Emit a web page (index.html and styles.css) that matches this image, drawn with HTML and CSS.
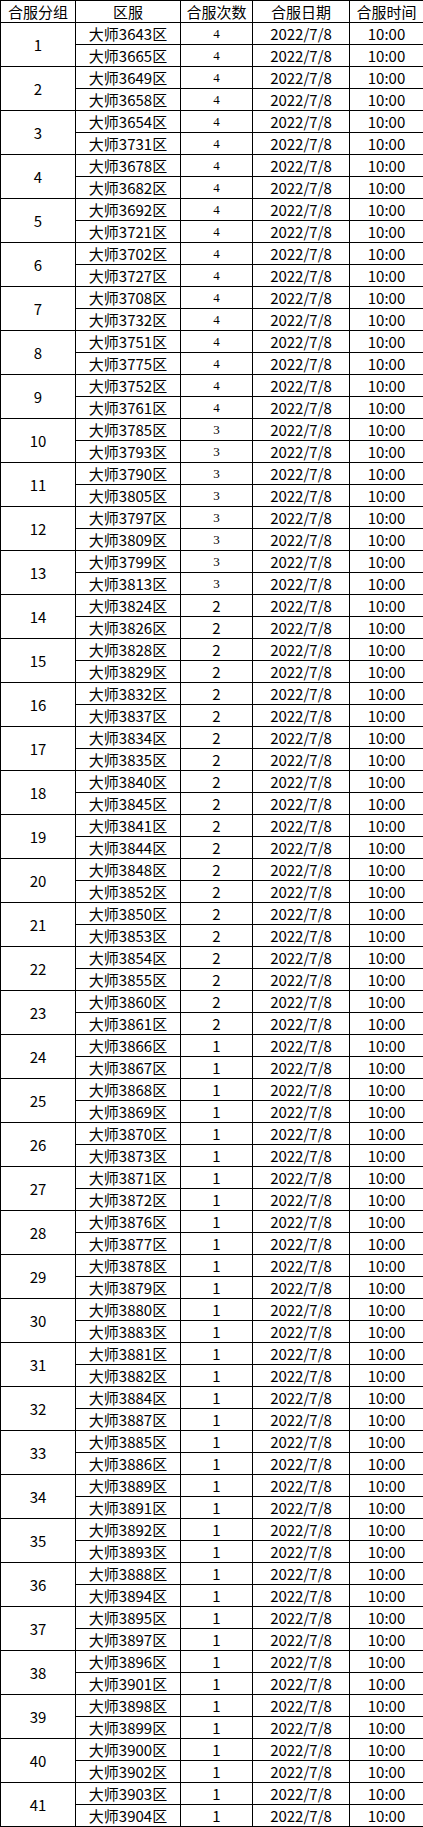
FILE: index.html
```html
<!DOCTYPE html>
<html lang="zh-CN">
<head>
<meta charset="utf-8">
<title>合服安排</title>
<link rel="stylesheet" href="styles.css">
</head>
<body>
<table class="merge">
<colgroup><col class="c1"><col class="c2"><col class="c3"><col class="c4"><col class="c5"></colgroup>
<thead>
<tr><th>合服分组</th><th>区服</th><th>合服次数</th><th>合服日期</th><th>合服时间</th></tr>
</thead>
<tbody>
<tr><td rowspan="2">1</td><td>大师3643区</td><td class="s">4</td><td>2022/7/8</td><td>10:00</td></tr>
<tr><td>大师3665区</td><td class="s">4</td><td>2022/7/8</td><td>10:00</td></tr>
<tr><td rowspan="2">2</td><td>大师3649区</td><td class="s">4</td><td>2022/7/8</td><td>10:00</td></tr>
<tr><td>大师3658区</td><td class="s">4</td><td>2022/7/8</td><td>10:00</td></tr>
<tr><td rowspan="2">3</td><td>大师3654区</td><td class="s">4</td><td>2022/7/8</td><td>10:00</td></tr>
<tr><td>大师3731区</td><td class="s">4</td><td>2022/7/8</td><td>10:00</td></tr>
<tr><td rowspan="2">4</td><td>大师3678区</td><td class="s">4</td><td>2022/7/8</td><td>10:00</td></tr>
<tr><td>大师3682区</td><td class="s">4</td><td>2022/7/8</td><td>10:00</td></tr>
<tr><td rowspan="2">5</td><td>大师3692区</td><td class="s">4</td><td>2022/7/8</td><td>10:00</td></tr>
<tr><td>大师3721区</td><td class="s">4</td><td>2022/7/8</td><td>10:00</td></tr>
<tr><td rowspan="2">6</td><td>大师3702区</td><td class="s">4</td><td>2022/7/8</td><td>10:00</td></tr>
<tr><td>大师3727区</td><td class="s">4</td><td>2022/7/8</td><td>10:00</td></tr>
<tr><td rowspan="2">7</td><td>大师3708区</td><td class="s">4</td><td>2022/7/8</td><td>10:00</td></tr>
<tr><td>大师3732区</td><td class="s">4</td><td>2022/7/8</td><td>10:00</td></tr>
<tr><td rowspan="2">8</td><td>大师3751区</td><td class="s">4</td><td>2022/7/8</td><td>10:00</td></tr>
<tr><td>大师3775区</td><td class="s">4</td><td>2022/7/8</td><td>10:00</td></tr>
<tr><td rowspan="2">9</td><td>大师3752区</td><td class="s">4</td><td>2022/7/8</td><td>10:00</td></tr>
<tr><td>大师3761区</td><td class="s">4</td><td>2022/7/8</td><td>10:00</td></tr>
<tr><td rowspan="2">10</td><td>大师3785区</td><td class="s">3</td><td>2022/7/8</td><td>10:00</td></tr>
<tr><td>大师3793区</td><td class="s">3</td><td>2022/7/8</td><td>10:00</td></tr>
<tr><td rowspan="2">11</td><td>大师3790区</td><td class="s">3</td><td>2022/7/8</td><td>10:00</td></tr>
<tr><td>大师3805区</td><td class="s">3</td><td>2022/7/8</td><td>10:00</td></tr>
<tr><td rowspan="2">12</td><td>大师3797区</td><td class="s">3</td><td>2022/7/8</td><td>10:00</td></tr>
<tr><td>大师3809区</td><td class="s">3</td><td>2022/7/8</td><td>10:00</td></tr>
<tr><td rowspan="2">13</td><td>大师3799区</td><td class="s">3</td><td>2022/7/8</td><td>10:00</td></tr>
<tr><td>大师3813区</td><td class="s">3</td><td>2022/7/8</td><td>10:00</td></tr>
<tr><td rowspan="2">14</td><td>大师3824区</td><td>2</td><td>2022/7/8</td><td>10:00</td></tr>
<tr><td>大师3826区</td><td>2</td><td>2022/7/8</td><td>10:00</td></tr>
<tr><td rowspan="2">15</td><td>大师3828区</td><td>2</td><td>2022/7/8</td><td>10:00</td></tr>
<tr><td>大师3829区</td><td>2</td><td>2022/7/8</td><td>10:00</td></tr>
<tr><td rowspan="2">16</td><td>大师3832区</td><td>2</td><td>2022/7/8</td><td>10:00</td></tr>
<tr><td>大师3837区</td><td>2</td><td>2022/7/8</td><td>10:00</td></tr>
<tr><td rowspan="2">17</td><td>大师3834区</td><td>2</td><td>2022/7/8</td><td>10:00</td></tr>
<tr><td>大师3835区</td><td>2</td><td>2022/7/8</td><td>10:00</td></tr>
<tr><td rowspan="2">18</td><td>大师3840区</td><td>2</td><td>2022/7/8</td><td>10:00</td></tr>
<tr><td>大师3845区</td><td>2</td><td>2022/7/8</td><td>10:00</td></tr>
<tr><td rowspan="2">19</td><td>大师3841区</td><td>2</td><td>2022/7/8</td><td>10:00</td></tr>
<tr><td>大师3844区</td><td>2</td><td>2022/7/8</td><td>10:00</td></tr>
<tr><td rowspan="2">20</td><td>大师3848区</td><td>2</td><td>2022/7/8</td><td>10:00</td></tr>
<tr><td>大师3852区</td><td>2</td><td>2022/7/8</td><td>10:00</td></tr>
<tr><td rowspan="2">21</td><td>大师3850区</td><td>2</td><td>2022/7/8</td><td>10:00</td></tr>
<tr><td>大师3853区</td><td>2</td><td>2022/7/8</td><td>10:00</td></tr>
<tr><td rowspan="2">22</td><td>大师3854区</td><td>2</td><td>2022/7/8</td><td>10:00</td></tr>
<tr><td>大师3855区</td><td>2</td><td>2022/7/8</td><td>10:00</td></tr>
<tr><td rowspan="2">23</td><td>大师3860区</td><td>2</td><td>2022/7/8</td><td>10:00</td></tr>
<tr><td>大师3861区</td><td>2</td><td>2022/7/8</td><td>10:00</td></tr>
<tr><td rowspan="2">24</td><td>大师3866区</td><td>1</td><td>2022/7/8</td><td>10:00</td></tr>
<tr><td>大师3867区</td><td>1</td><td>2022/7/8</td><td>10:00</td></tr>
<tr><td rowspan="2">25</td><td>大师3868区</td><td>1</td><td>2022/7/8</td><td>10:00</td></tr>
<tr><td>大师3869区</td><td>1</td><td>2022/7/8</td><td>10:00</td></tr>
<tr><td rowspan="2">26</td><td>大师3870区</td><td>1</td><td>2022/7/8</td><td>10:00</td></tr>
<tr><td>大师3873区</td><td>1</td><td>2022/7/8</td><td>10:00</td></tr>
<tr><td rowspan="2">27</td><td>大师3871区</td><td>1</td><td>2022/7/8</td><td>10:00</td></tr>
<tr><td>大师3872区</td><td>1</td><td>2022/7/8</td><td>10:00</td></tr>
<tr><td rowspan="2">28</td><td>大师3876区</td><td>1</td><td>2022/7/8</td><td>10:00</td></tr>
<tr><td>大师3877区</td><td>1</td><td>2022/7/8</td><td>10:00</td></tr>
<tr><td rowspan="2">29</td><td>大师3878区</td><td>1</td><td>2022/7/8</td><td>10:00</td></tr>
<tr><td>大师3879区</td><td>1</td><td>2022/7/8</td><td>10:00</td></tr>
<tr><td rowspan="2">30</td><td>大师3880区</td><td>1</td><td>2022/7/8</td><td>10:00</td></tr>
<tr><td>大师3883区</td><td>1</td><td>2022/7/8</td><td>10:00</td></tr>
<tr><td rowspan="2">31</td><td>大师3881区</td><td>1</td><td>2022/7/8</td><td>10:00</td></tr>
<tr><td>大师3882区</td><td>1</td><td>2022/7/8</td><td>10:00</td></tr>
<tr><td rowspan="2">32</td><td>大师3884区</td><td>1</td><td>2022/7/8</td><td>10:00</td></tr>
<tr><td>大师3887区</td><td>1</td><td>2022/7/8</td><td>10:00</td></tr>
<tr><td rowspan="2">33</td><td>大师3885区</td><td>1</td><td>2022/7/8</td><td>10:00</td></tr>
<tr><td>大师3886区</td><td>1</td><td>2022/7/8</td><td>10:00</td></tr>
<tr><td rowspan="2">34</td><td>大师3889区</td><td>1</td><td>2022/7/8</td><td>10:00</td></tr>
<tr><td>大师3891区</td><td>1</td><td>2022/7/8</td><td>10:00</td></tr>
<tr><td rowspan="2">35</td><td>大师3892区</td><td>1</td><td>2022/7/8</td><td>10:00</td></tr>
<tr><td>大师3893区</td><td>1</td><td>2022/7/8</td><td>10:00</td></tr>
<tr><td rowspan="2">36</td><td>大师3888区</td><td>1</td><td>2022/7/8</td><td>10:00</td></tr>
<tr><td>大师3894区</td><td>1</td><td>2022/7/8</td><td>10:00</td></tr>
<tr><td rowspan="2">37</td><td>大师3895区</td><td>1</td><td>2022/7/8</td><td>10:00</td></tr>
<tr><td>大师3897区</td><td>1</td><td>2022/7/8</td><td>10:00</td></tr>
<tr><td rowspan="2">38</td><td>大师3896区</td><td>1</td><td>2022/7/8</td><td>10:00</td></tr>
<tr><td>大师3901区</td><td>1</td><td>2022/7/8</td><td>10:00</td></tr>
<tr><td rowspan="2">39</td><td>大师3898区</td><td>1</td><td>2022/7/8</td><td>10:00</td></tr>
<tr><td>大师3899区</td><td>1</td><td>2022/7/8</td><td>10:00</td></tr>
<tr><td rowspan="2">40</td><td>大师3900区</td><td>1</td><td>2022/7/8</td><td>10:00</td></tr>
<tr><td>大师3902区</td><td>1</td><td>2022/7/8</td><td>10:00</td></tr>
<tr><td rowspan="2">41</td><td>大师3903区</td><td>1</td><td>2022/7/8</td><td>10:00</td></tr>
<tr><td>大师3904区</td><td>1</td><td>2022/7/8</td><td>10:00</td></tr>
</tbody>
</table>
</body>
</html>
```
FILE: styles.css
```css
html, body {
  margin: 0;
  padding: 0;
  background: #ffffff;
}
body {
  font-family: "Noto Sans CJK SC", "Noto Sans", sans-serif;
  font-size: 15px;
  color: #000000;
}
.merge {
  border-collapse: collapse;
  table-layout: fixed;
  width: 423px;
}
.merge .c1 { width: 75px; }
.merge .c2 { width: 105px; }
.merge .c3 { width: 72px; }
.merge .c4 { width: 97px; }
.merge .c5 { width: 74px; }
.merge tr {
  height: 22px;
}
.merge th,
.merge td {
  border: 1px solid #000000;
  padding: 0;
  height: 21px;
  line-height: 20px;
  text-align: center;
  vertical-align: middle;
  font-weight: normal;
  white-space: nowrap;
  overflow: hidden;
}
.merge td.s {
  font-family: "Liberation Serif", "DejaVu Serif", serif;
  font-size: 13px;
}
```
